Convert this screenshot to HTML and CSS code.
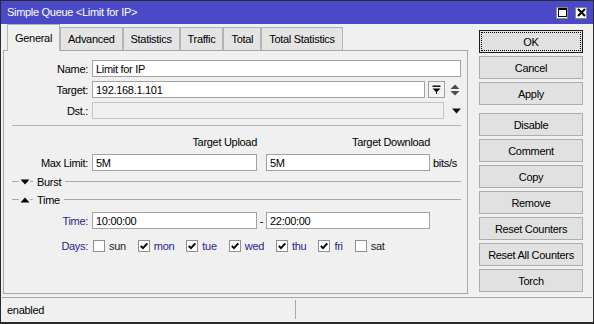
FILE: index.html
```html
<!DOCTYPE html>
<html>
<head>
<meta charset="utf-8">
<title>Simple Queue</title>
<link rel="stylesheet" href="styles.css">
</head>
<body>
<div class="window">
  <div class="titlebar">
    <span class="title">Simple Queue &lt;Limit for IP&gt;</span>
    <div class="tb-buttons">
      <span class="tb-btn"><svg width="9" height="9" viewBox="0 0 9 9"><rect x="0.5" y="0.5" width="8" height="8" fill="none" stroke="#000"/><rect x="0" y="0" width="9" height="2" fill="#000"/></svg></span>
      <span class="tb-btn"><svg width="9" height="9" viewBox="0 0 9 9"><path d="M1 1 L8 8 M8 1 L1 8" stroke="#000" stroke-width="2"/></svg></span>
    </div>
  </div>
  <div class="main">
    <div class="left">
      <div class="tabs">
        <div class="tab active">General</div>
        <div class="tab">Advanced</div>
        <div class="tab">Statistics</div>
        <div class="tab">Traffic</div>
        <div class="tab">Total</div>
        <div class="tab">Total Statistics</div>
      </div>
      <div class="panel">
        <div class="row">
          <label class="label">Name:</label>
          <div class="field w-name">Limit for IP</div>
        </div>
        <div class="row">
          <label class="label">Target:</label>
          <div class="field w-target">192.168.1.101</div>
          <span class="minibox"><svg width="9" height="9" viewBox="0 0 9 9"><rect x="0.5" y="0.5" width="8" height="1.4" fill="#000"/><path d="M0.5 3.5 H8.5 L4.5 7.5 Z" fill="#000"/><rect x="4" y="7" width="1" height="2" fill="#000"/></svg></span>
          <span class="updown"><svg width="10" height="12" viewBox="0 0 10 12"><path d="M0.5 5 L5 0.5 L9.5 5 Z" fill="#4a4a4a"/><path d="M0.5 7 L9.5 7 L5 11.5 Z" fill="#4a4a4a"/></svg></span>
        </div>
        <div class="row">
          <label class="label">Dst.:</label>
          <div class="field disabled w-dst"></div>
          <span class="dropdown"><svg width="9" height="6" viewBox="0 0 9 6"><path d="M0 0.5 H9 L4.5 5.5 Z" fill="#111"/></svg></span>
        </div>
        <div class="sep"></div>
        <div class="row heads">
          <span class="label"></span>
          <span class="head w-col1">Target Upload</span>
          <span class="head w-col2">Target Download</span>
        </div>
        <div class="row">
          <label class="label">Max Limit:</label>
          <div class="field w-col1">5M</div>
          <div class="field w-col2 col2">5M</div>
          <span class="unit">bits/s</span>
        </div>
        <div class="group g-burst">
          <span class="gline short"></span>
          <svg class="gtri" width="10" height="6" viewBox="0 0 10 6"><path d="M0.5 0.5 H9.5 L5 5.5 Z" fill="#000"/></svg>
          <span class="gline dash"></span>
          <span class="gtext">Burst</span>
          <span class="gline fill"></span>
        </div>
        <div class="group g-time">
          <span class="gline short"></span>
          <svg class="gtri" width="10" height="6" viewBox="0 0 10 6"><path d="M0.5 5.5 H9.5 L5 0.5 Z" fill="#000"/></svg>
          <span class="gline dash"></span>
          <span class="gtext">Time</span>
          <span class="gline fill"></span>
        </div>
        <div class="row r-time">
          <label class="label blue">Time:</label>
          <div class="field w-col1">10:00:00</div>
          <span class="dashsep">-</span>
          <div class="field w-col2">22:00:00</div>
        </div>
        <div class="row r-days">
          <label class="label blue">Days:</label>
          <div class="days">
            <span class="day"><span class="cb"></span><span class="dtext">sun</span></span>
            <span class="day on"><span class="cb"><svg width="10" height="10" viewBox="0 0 10 10"><path d="M1.8 4.8 L4 7.2 L8.3 2.4" fill="none" stroke="#000" stroke-width="1.9"/></svg></span><span class="dtext">mon</span></span>
            <span class="day on"><span class="cb"><svg width="10" height="10" viewBox="0 0 10 10"><path d="M1.8 4.8 L4 7.2 L8.3 2.4" fill="none" stroke="#000" stroke-width="1.9"/></svg></span><span class="dtext">tue</span></span>
            <span class="day on"><span class="cb"><svg width="10" height="10" viewBox="0 0 10 10"><path d="M1.8 4.8 L4 7.2 L8.3 2.4" fill="none" stroke="#000" stroke-width="1.9"/></svg></span><span class="dtext">wed</span></span>
            <span class="day on"><span class="cb"><svg width="10" height="10" viewBox="0 0 10 10"><path d="M1.8 4.8 L4 7.2 L8.3 2.4" fill="none" stroke="#000" stroke-width="1.9"/></svg></span><span class="dtext">thu</span></span>
            <span class="day on"><span class="cb"><svg width="10" height="10" viewBox="0 0 10 10"><path d="M1.8 4.8 L4 7.2 L8.3 2.4" fill="none" stroke="#000" stroke-width="1.9"/></svg></span><span class="dtext">fri</span></span>
            <span class="day"><span class="cb"></span><span class="dtext">sat</span></span>
          </div>
        </div>
      </div>
    </div>
    <div class="buttons">
      <button class="btn ok">OK</button>
      <button class="btn">Cancel</button>
      <button class="btn">Apply</button>
      <button class="btn gap">Disable</button>
      <button class="btn">Comment</button>
      <button class="btn">Copy</button>
      <button class="btn">Remove</button>
      <button class="btn">Reset Counters</button>
      <button class="btn">Reset All Counters</button>
      <button class="btn">Torch</button>
    </div>
  </div>
  <div class="statusbar">
    <div class="scell first">enabled</div>
    <div class="scell second"></div>
  </div>
</div>
</body>
</html>
```

FILE: styles.css
```css
html, body {
  margin: 0;
  padding: 0;
}
body {
  background: #f0f0f0;
  font-family: "Liberation Sans", Arial, sans-serif;
  font-size: 11px;
  letter-spacing: -0.3px;
  color: #000;
}
.window {
  width: 594px;
  height: 324px;
  box-sizing: border-box;
  border: 1px solid #2a2a2a;
  border-bottom-width: 2px;
  display: flex;
  flex-direction: column;
  background: #f0f0f0;
}
.titlebar {
  height: 23px;
  flex: none;
  background: #4a4ac9;
  color: #fff;
  display: flex;
  align-items: center;
  padding-left: 6px;
  font-size: 11px;
}
.title {
  flex: 1;
  margin-top: -1px;
}
.tb-buttons {
  display: flex;
  gap: 7px;
  margin-right: 6px;
}
.tb-btn {
  width: 12px;
  height: 12px;
  box-sizing: border-box;
  background: #fff;
  border: 1px solid #8a8a8a;
  display: flex;
  align-items: center;
  justify-content: center;
}
.main {
  height: 272px;
  flex: none;
  display: flex;
}
.left {
  width: 465px;
  margin-left: 2px;
  display: flex;
  flex-direction: column;
}
.tabs {
  height: 26px;
  display: flex;
  align-items: flex-end;
  padding-left: 4px;
  position: relative;
  z-index: 1;
}
.tab {
  height: 23px;
  box-sizing: border-box;
  padding: 0 7px;
  border: 1px solid #b4b4b4;
  border-bottom: none;
  background: #e4e4e4;
  display: flex;
  align-items: center;
  justify-content: center;
  white-space: nowrap;
}
.tab.active {
  height: 27px;
  margin-bottom: -1px;
  background: #f0f0f0;
  padding: 0 7px;
}
.panel {
  height: 244px;
  box-sizing: border-box;
  border: 1px solid #a8a8a8;
  padding: 9px 6px 0 0;
}
.row {
  display: flex;
  align-items: center;
  gap: 4px;
  height: 17px;
  margin-bottom: 4px;
}
.label {
  width: 84px;
  flex: none;
  text-align: right;
  white-space: nowrap;
}
.label.blue {
  color: #26268a;
}
.field {
  height: 17px;
  box-sizing: border-box;
  border: 1px solid #a2a2a2;
  background: #fff;
  padding: 0 3px;
  display: flex;
  align-items: center;
  white-space: nowrap;
}
.field.disabled {
  background: #f0f0f0;
  border-color: #c4c4c4;
}
.w-name { width: 369px; }
.w-target { width: 333px; }
.w-dst { width: 352px; }
.w-col1 { width: 165px; flex: none; }
.w-col2 { width: 164px; flex: none; }
.col2 { margin-left: 5px; }
.minibox {
  width: 17px;
  height: 17px;
  box-sizing: border-box;
  border: 1px solid #a2a2a2;
  background: #f4f4f4;
  margin-left: -1px;
  display: flex;
  align-items: center;
  justify-content: center;
}
.updown {
  margin-left: 1px;
  display: flex;
  align-items: center;
}
.dropdown {
  margin-left: 4px;
  display: flex;
  align-items: center;
}
.sep {
  height: 1px;
  background: #b4b4b4;
  margin: 6px 0 9px 8px;
}
.heads {
  height: 13px;
  margin-bottom: 6px;
}
.head {
  text-align: right;
  white-space: nowrap;
}
.head.w-col2 {
  margin-left: 5px;
}
.unit {
  margin-left: -1px;
}
.group {
  display: flex;
  align-items: center;
  height: 13px;
  margin: 2px 0 5px 8px;
}
.g-time {
  margin-top: 0;
}
.gline {
  height: 1px;
  background: #a8a8a8;
  flex: none;
}
.gline.short { width: 7px; margin-right: 1px; }
.gline.dash { width: 3px; margin-left: 0; }
.gline.fill { flex: 1; margin-left: 4px; }
.gtri { flex: none; }
.gtext { margin-left: 4px; }
.r-time {
  margin-top: 6px;
  margin-bottom: 8px;
}
.dashsep {
  width: 9px;
  margin: 0 -4px;
  text-align: center;
}
.r-days {
  height: 17px;
}
.days {
  display: flex;
  align-items: center;
  margin-left: 1px;
}
.day {
  display: flex;
  align-items: center;
  margin-right: 12px;
  color: #1e1e1e;
}
.day.on {
  color: #26268a;
}
.cb {
  width: 12px;
  height: 12px;
  box-sizing: border-box;
  border: 1px solid #8f8f8f;
  background: #fff;
  display: flex;
  align-items: center;
  justify-content: center;
  margin-right: 4px;
}
.buttons {
  width: 104px;
  margin-left: 11px;
  padding-top: 6px;
  display: flex;
  flex-direction: column;
  gap: 3px;
}
.btn {
  height: 23px;
  width: 104px;
  box-sizing: border-box;
  border: 1px solid #adadad;
  background: #e1e1e1;
  font-family: inherit;
  font-size: 11px;
  letter-spacing: -0.3px;
  color: #000;
  padding: 0;
  position: relative;
}
.btn.gap {
  margin-top: 5px;
}
.btn.ok {
  border-color: #1a1a1a;
}
.btn.ok::after {
  content: "";
  position: absolute;
  inset: 1px;
  border: 1px dotted #000;
}
.statusbar {
  flex: 1;
  display: flex;
  margin: 1px 1px 0 1px;
  border-top: 1px solid #a8a8a8;
}
.scell {
  display: flex;
  align-items: center;
}
.scell.first {
  width: 288px;
  padding-left: 5px;
}
.scell.second {
  flex: 1;
  border-left: 1px solid #a8a8a8;
  margin: 2px 0 3px 0;
}
```
